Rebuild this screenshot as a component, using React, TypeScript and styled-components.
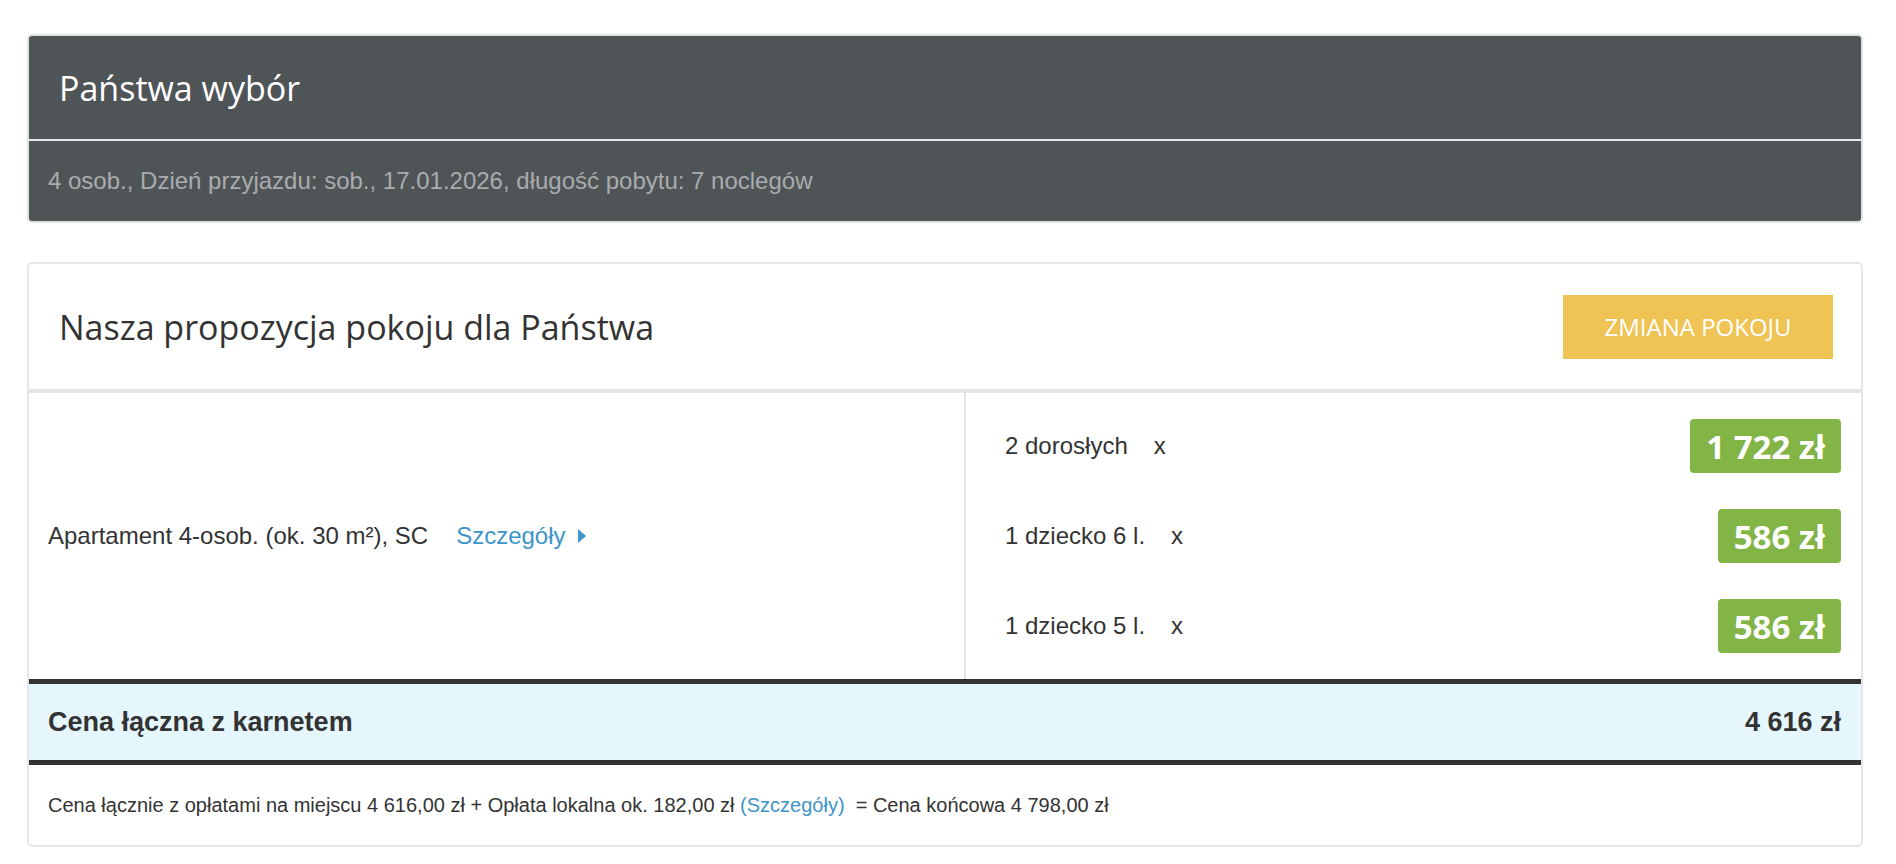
import React from "react";
import styled, { createGlobalStyle } from "styled-components";

const Global = createGlobalStyle`
  body { margin: 0; background: #fff; font-family: "Liberation Sans", Arial, sans-serif; color: #333; }
`;
const Page = styled.div`
  padding: 34px 33px 20px 27px;
  display: flex; flex-direction: column; gap: 39px;
`;
const Card = styled.div<{ dark?: boolean }>`
  border: 2px solid ${p => (p.dark ? "#e2e2e2" : "#e6e6e6")};
  border-radius: 5px;
  background: ${p => (p.dark ? "#4f5457" : "#fff")};
  overflow: hidden;
`;
const DarkTitle = styled.div`
  height: 103px; display: flex; align-items: center; padding: 0 30px;
  font-family: "Open Sans", sans-serif; font-size: 34px; color: #fff;
  border-bottom: 2px solid #e8e8e8;
`;
const DarkSub = styled.div`
  height: 80px; display: flex; align-items: center; padding: 0 19px;
  font-size: 24px; color: #a9acae;
`;
const Head = styled.div`
  height: 125px; display: flex; align-items: center; justify-content: space-between;
  padding: 0 28px 0 30px; border-bottom: 4px solid #e5e5e5;
`;
const HeadTitle = styled.div`
  font-family: "Open Sans", sans-serif; font-size: 34px; color: #333;
`;
const Button = styled.button`
  width: 270px; height: 64px; border: 0; background: #f0c355; color: #fff;
  font-family: "Open Sans", sans-serif; font-size: 24px; cursor: pointer;
`;
const Body = styled.div`
  display: grid; grid-template-columns: 937px 1fr; height: 286px;
`;
const Left = styled.div`
  border-right: 2px solid #e5e5e5; display: flex; align-items: center;
  padding: 0 19px; font-size: 24px; color: #333; gap: 28px;
`;
const Link = styled.a`
  color: #3d94c8; text-decoration: none; display: inline-flex; align-items: center; gap: 12px;
`;
const Tri = styled.span`
  width: 0; height: 0; border-left: 8px solid #3d94c8;
  border-top: 7px solid transparent; border-bottom: 7px solid transparent;
`;
const Right = styled.div`
  display: flex; flex-direction: column; justify-content: center; gap: 36px;
  padding: 0 20px 0 39px;
`;
const Row = styled.div`
  display: flex; align-items: center; justify-content: space-between; height: 54px;
  font-size: 24px; color: #333;
`;
const Label = styled.span`
  display: inline-block; min-width: 0;
`;
const X = styled.span` margin-left: 26px; `;
const Badge = styled.span`
  background: #82b446; color: #fff; border-radius: 4px; height: 54px; padding: 0 16px;
  display: flex; align-items: center; font-family: "Open Sans", sans-serif;
  font-weight: 700; font-size: 33px;
`;
const Total = styled.div`
  border-top: 5px solid #333; border-bottom: 5px solid #333; background: #e5f6fd;
  height: 76px; display: flex; align-items: center; justify-content: space-between;
  padding: 0 20px 0 19px; font-weight: 700; font-size: 27px; color: #333;
`;
const Foot = styled.div`
  height: 80px; display: flex; align-items: center; padding: 0 19px;
  font-size: 20px; color: #333; white-space: pre;
`;
const FootLink = styled.span` color: #3d94c8; `;

const rows = [
  { l: "2 dorosłych", p: "1 722 zł" },
  { l: "1 dziecko 6 l.", p: "586 zł" },
  { l: "1 dziecko 5 l.", p: "586 zł" },
];

export default function App() {
  return (
    <>
      <Global />
      <Page>
        <Card dark>
          <DarkTitle>Państwa wybór</DarkTitle>
          <DarkSub>4 osob., Dzień przyjazdu: sob., 17.01.2026, długość pobytu: 7 noclegów</DarkSub>
        </Card>
        <Card>
          <Head>
            <HeadTitle>Nasza propozycja pokoju dla Państwa</HeadTitle>
            <Button>ZMIANA POKOJU</Button>
          </Head>
          <Body>
            <Left>
              <span>Apartament 4-osob. (ok. 30 m²), SC</span>
              <Link href="#">Szczegóły <Tri /></Link>
            </Left>
            <Right>
              {rows.map(r => (
                <Row key={r.l}>
                  <Label>{r.l}<X>x</X></Label>
                  <Badge>{r.p}</Badge>
                </Row>
              ))}
            </Right>
          </Body>
          <Total>
            <span>Cena łączna z karnetem</span>
            <span>4 616 zł</span>
          </Total>
          <Foot>
            Cena łącznie z opłatami na miejscu 4 616,00 zł + Opłata lokalna ok. 182,00 zł <FootLink>(Szczegóły)</FootLink>  = Cena końcowa 4 798,00 zł
          </Foot>
        </Card>
      </Page>
    </>
  );
}
